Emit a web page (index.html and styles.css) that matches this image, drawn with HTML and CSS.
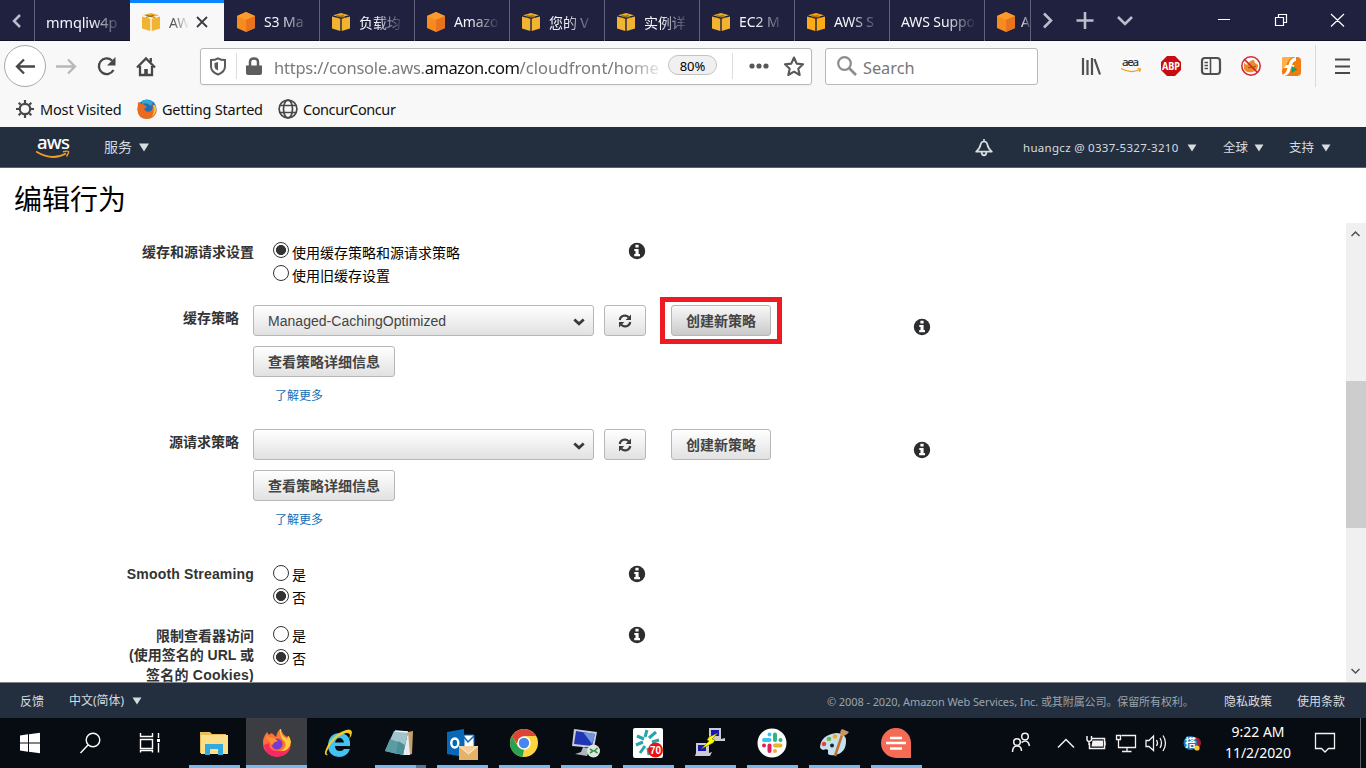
FILE: index.html
```html
<!DOCTYPE html>
<html lang="zh-CN">
<head>
<meta charset="utf-8">
<title>编辑行为</title>
<link rel="stylesheet" href="styles.css">
</head>
<body>
<svg class="defs" aria-hidden="true">
  <symbol id="hex" viewBox="0 0 20 20"><path d="M10 0 19 4V16L10 20 1 16V4Z" fill="#f68b1f"/><path d="M10 0 19 4 10 8 1 4Z" fill="#fb9b2b"/><path d="M10 8 19 4V16L10 20Z" fill="#e9731c"/></symbol>
  <symbol id="cube" viewBox="0 0 20 20"><path d="M10 1 18 3.3 10 5.6 2 3.3Z" fill="#f0b02a"/><path d="M1 4.5 9.3 6.8V19L1 16.6ZM10.7 6.8 19 4.5V16.6L10.7 19Z" fill="#f2b430"/><path d="M13 3 5 5.5M5 3 14 5.6" stroke="#87651f" stroke-width=".8"/></symbol>
  <symbol id="info" viewBox="0 0 18 18"><circle cx="9" cy="9" r="8.2" fill="#2b2d2f"/><path d="M7.4 2.8H10.6V5.6H7.4ZM6.3 7H10.6V12H12V14.2H6.2V12H7.5V9H6.3Z" fill="#fff"/></symbol>
  <symbol id="sync" viewBox="0 0 14 14"><path d="M1.7 6A5.3 5.3 0 0 1 10.7 3.2M12.3 8A5.3 5.3 0 0 1 3.3 10.8" fill="none" stroke="#3c3c3c" stroke-width="2.1"/><path d="M13 .6V6H7.7ZM1 13.4V8H6.3Z" fill="#3c3c3c"/></symbol>
  <symbol id="chev" viewBox="0 0 12 8"><path d="M1.3 1.4 6 5.8 10.7 1.4" fill="none" stroke="#393939" stroke-width="2.7"/></symbol>
  <symbol id="tri" viewBox="0 0 10 9"><path d="M0 .5H10L5 8.5Z" fill="#d7dce0"/></symbol>
</svg>

<div class="tabstrip">
  <div class="scroll-left"><svg width="12" height="16" viewBox="0 0 12 16"><path d="M9 2 3 8 9 14" fill="none" stroke="#bcbccb" stroke-width="2.5"/></svg></div>
  <div class="tab plain first"><span class="tt">mmqliw4p</span></div>
  <div class="tab active"><svg class="fav"><use href="#cube"/></svg><span class="tt">AW</span><svg class="tabx" viewBox="0 0 12 12"><path d="M1 1 11 11M11 1 1 11" stroke="#3c3c43" stroke-width="1.8"/></svg></div>
  <div class="tab nosep"><svg class="fav hex"><use href="#hex"/></svg><span class="tt">S3 Ma</span></div>
  <div class="tab"><svg class="fav"><use href="#cube"/></svg><span class="tt">负载均</span></div>
  <div class="tab"><svg class="fav hex"><use href="#hex"/></svg><span class="tt">Amazo</span></div>
  <div class="tab"><svg class="fav"><use href="#cube"/></svg><span class="tt">您的 V</span></div>
  <div class="tab"><svg class="fav"><use href="#cube"/></svg><span class="tt">实例详</span></div>
  <div class="tab"><svg class="fav"><use href="#cube"/></svg><span class="tt">EC2 M</span></div>
  <div class="tab"><svg class="fav orange"><use href="#cube"/></svg><span class="tt">AWS S</span></div>
  <div class="tab plain"><span class="tt">AWS Suppo</span></div>
  <div class="tab cut"><svg class="fav hex"><use href="#hex"/></svg><span class="tt">A</span></div>
  <svg class="tabtools" width="335" height="41" viewBox="1031 0 335 41" fill="none" stroke="#bcbccb" stroke-width="2.6"><path d="M1044 13.500 1051 20.500 1044 27.500M1076.500 20.500H1093.500M1085 12V29M1118 17 1125 24 1132 17"/><g stroke="#fff" stroke-width="1.2"><path d="M1218 19.500H1230M1275.500 17.500H1283.500V25.500H1275.500ZM1278.500 17.500V14.500H1286.500V22.500H1283.500M1331 14 1344 26.500M1344 14 1331 26.500"/></g></svg>
</div>

<div class="navbar">
  <svg width="200" height="49" viewBox="0 42 200 49" fill="none" stroke="#484848" stroke-width="2.3">
    <circle cx="25" cy="67" r="20.500" fill="#fff" stroke="#a9a9a9" stroke-width="1"/>
    <path d="M35 67.500H17M24 60.500 17 67.500 24 74.500"/><path d="M56 67.500H75M68 60.500 75 67.500 68 74.500" stroke="#b8b8b8"/>
    <path d="M113.500 71A7.800 7.800 0 1 1 112 61.500"/><path d="M115.500 58V66.500H107Z" fill="#484848" stroke="none"/>
    <path d="M137 68.500 146 59.500 155 68.500M140 67V76H152V67M150.800 59V63"/><path d="M144.200 70H147.800V76H144.200Z" fill="#484848" stroke="none"/>
  </svg>
  <div class="urlbar">
    <svg width="68" height="36" viewBox="201 49 68 36"><path d="M218 58.300C220 59.500 222.500 60 225 60V66.500C225 70.500 222 73 218 74.500 214 73 211 70.500 211 66.500V60C213.500 60 216 59.500 218 58.300Z" fill="none" stroke="#5a5a5a" stroke-width="2"/><path d="M218 62V70.500C216 69.500 214.500 68.500 214.500 66.500V63Z" fill="#5a5a5a"/><path d="M236.500 53V79" stroke="#ddd"/><path d="M246 65.500H262V73Q262 75 260 75H248Q246 75 246 73Z" fill="#5d5d5d"/><path d="M250 66V62Q250 58.500 254 58.500T258 62V66" fill="none" stroke="#5d5d5d" stroke-width="2.500"/></svg>
    <div class="url">https://console.aws.<b>amazon.com</b><span>/cloudfront/home</span></div>
    <span class="zoom">80%</span>
    <svg width="92" height="36" viewBox="719 49 92 36"><path d="M732.500 53V79" stroke="#ddd"/><g fill="#585858"><circle cx="752" cy="66" r="2.600"/><circle cx="759" cy="66" r="2.600"/><circle cx="766" cy="66" r="2.600"/></g><path d="M794 57.500 796.700 63.600 803 64.300 798.300 68.700 799.700 75 794 71.700 788.300 75 789.700 68.700 785 64.300 791.300 63.600Z" fill="none" stroke="#585858" stroke-width="2.100" stroke-linejoin="round"/></svg>
  </div>
  <div class="searchbar"><svg width="22" height="22" viewBox="0 0 22 22"><circle cx="8.500" cy="8.500" r="6.300" fill="none" stroke="#8c8c8c" stroke-width="2.200"/><path d="M13 13 20 20" stroke="#8c8c8c" stroke-width="2.600"/></svg><span>Search</span></div>
  <svg class="ext" width="328" height="49" viewBox="1038 41 328 49">
    <path d="M1083 58V75M1087.500 60V75M1092 58V75M1094.500 59 1100 74.500" stroke="#505050" stroke-width="2.200"/>
    <text x="1122" y="66" class="aea" textLength="17">aea</text><path d="M1121 68.500Q1131 74 1140 69.500M1137.500 68.500 1140.500 69 1139.500 72" fill="none" stroke="#f49a1c" stroke-width="1.200"/>
    <path d="M1167 56H1175L1181 62V70L1175 76H1167L1161 70V62Z" fill="#c70d10"/><text x="1162" y="69.700" class="abp" textLength="18" lengthAdjust="spacingAndGlyphs">ABP</text>
    <rect x="1202" y="58" width="18" height="16" rx="3" fill="none" stroke="#505050" stroke-width="2.200"/><path d="M1210.500 58V74M1204.500 62.500H1208M1204.500 65.500H1208M1204.500 68.500H1208" stroke="#505050" stroke-width="1.600"/>
    <path d="M1244 63 1247 65Q1250 60 1254 60L1255 63 1258 65Q1258 71 1252 72 1246 73 1244 69Z" fill="#ec8c27"/><path d="M1248 68Q1251 66 1252 68L1256 66" stroke="#805020" fill="none"/><circle cx="1251" cy="66" r="9.200" fill="none" stroke="#d1252a" stroke-width="1.500"/><path d="M1244.500 59.500 1257.500 72.500" stroke="#d1252a" stroke-width="1.700"/>
    <rect x="1282" y="57" width="19" height="19" rx="4" fill="#f47a12"/><path d="M1282 58Q1282 57 1284 57H1293Q1288 59 1286 66L1282 70Z" fill="#fbb04a"/><path d="M1282 75Q1286 74 1287.500 68H1284L1286 65H1288.500Q1290 58 1296 57V61Q1293 61 1292 65H1294.500L1293 68H1291Q1289 76 1284 76Z" fill="#fff"/><path d="M1291.500 66 1297.500 69.500 1291.500 73Z" fill="#16a357"/>
    <path d="M1315.500 45V87" stroke="#d9d9d9"/><path d="M1335 59.500H1350M1335 66.500H1350M1335 73H1350" stroke="#484848" stroke-width="2.200"/>
  </svg>
</div>

<div class="bookmarks">
  <svg width="18" height="18" viewBox="-9 -9 18 18" stroke="#484848" fill="none"><circle r="5.200" stroke-width="2.200"/><path d="M0-6V-9M0 6V9M-6 0H-9M6 0H9M4.300-4.300 6.300-6.300M-4.300 4.300-6.300 6.300M4.300 4.300 6.300 6.300M-4.300-4.300-6.300-6.300" stroke-width="2.200"/></svg><span class="b1">Most Visited</span>
  <svg width="20" height="20" viewBox="0 0 20 20"><circle cx="10" cy="10" r="9.500" fill="#236fb5"/><path d="M5 2Q11-1 16 3L14 7Q10 3 5 5Z" fill="#35a8d8"/><path d="M1 3 5 5Q7 5 8.500 7L10 8 7 10Q9 14 14 12 17 9 15 5 20 8 19.500 13 17 20 10 20 1 20 .5 11Z" fill="#e86b20"/><path d="M18 6Q21 13 15 17.500 18 12 16 6Z" fill="#f7c242"/></svg><span class="b2">Getting Started</span>
  <svg width="20" height="20" viewBox="0 0 20 20" fill="none" stroke="#484848" stroke-width="1.700"><circle cx="10" cy="10" r="8.900"/><ellipse cx="10" cy="10" rx="4.500" ry="8.900"/><path d="M2 6.500H18M2 13.500H18"/></svg><span class="b3">ConcurConcur</span>
</div>

<header class="awsbar">
  <div class="logo"><span>aws</span><svg width="34" height="9" viewBox="0 0 34 9"><path d="M0 1.500Q16 11.500 30 3.500" fill="none" stroke="#f49b26" stroke-width="1.900"/><path d="M27 1.700Q32 .5 32.500 1.500 33 3 30.500 6.500" fill="none" stroke="#f49b26" stroke-width="1.400"/></svg></div>
  <span class="svc">服务</span><svg class="tri"><use href="#tri"/></svg>
  <svg class="bell" viewBox="0 0 18 18" fill="none" stroke="#d7dce0" stroke-width="1.700"><path d="M1.200 12.700Q5 9 5.500 6 6 2.500 9 2.500T12.500 6Q13 9 16.800 12.700ZM9 0V2M6.500 13.500Q7 16.300 9 16.300T11.500 13.500" stroke-linejoin="round"/></svg>
  <span class="acct">huangcz @ 0337-5327-3210</span><svg class="tri t2"><use href="#tri"/></svg>
  <span class="menu">全球</span><svg class="tri t2"><use href="#tri"/></svg>
  <span class="menu m2">支持</span><svg class="tri t2"><use href="#tri"/></svg>
</header>

<h1>编辑行为</h1>
<main class="pane">
  <div class="form">
    <section class="row r1"><div class="label">缓存和源请求设置</div><div class="radios"><label><i class="radio on"></i><span>使用缓存策略和源请求策略</span></label><label><i class="radio"></i><span>使用旧缓存设置</span></label></div><svg class="info"><use href="#info"/></svg></section>
    <section class="row policy"><div class="label">缓存策略</div><div class="controls"><div class="line"><div class="btn select">Managed-CachingOptimized<svg class="chev"><use href="#chev"/></svg></div><div class="btn sync"><svg><use href="#sync"/></svg></div><div class="mark"><div class="btn create hover">创建新策略</div></div></div><div class="btn view">查看策略详细信息</div><a>了解更多</a></div><svg class="info i2"><use href="#info"/></svg></section>
    <section class="row policy"><div class="label">源请求策略</div><div class="controls"><div class="line"><div class="btn select"><svg class="chev"><use href="#chev"/></svg></div><div class="btn sync"><svg><use href="#sync"/></svg></div><div class="btn create">创建新策略</div></div><div class="btn view">查看策略详细信息</div><a>了解更多</a></div><svg class="info i2 i3"><use href="#info"/></svg></section>
    <section class="row r4"><div class="label sm">Smooth Streaming</div><div class="radios"><label><i class="radio"></i><span>是</span></label><label><i class="radio on"></i><span>否</span></label></div><svg class="info"><use href="#info"/></svg></section>
    <section class="row r5"><div class="label">限制查看器访问<br>(使用签名的 URL 或<br><span class="ck">签名的 Cookies)</span></div><div class="radios"><label><i class="radio"></i><span>是</span></label><label><i class="radio on"></i><span>否</span></label></div><svg class="info"><use href="#info"/></svg></section>
  </div>
  <div class="scrollbar"><svg width="20" height="20" viewBox="0 0 20 20"><path d="M5.500 13 9.500 9 13.500 13" fill="none" stroke="#505050" stroke-width="1.500"/></svg><div class="thumb"></div><svg class="down" width="20" height="20" viewBox="0 0 20 20"><path d="M5.500 7 9.500 11 13.500 7" fill="none" stroke="#505050" stroke-width="1.500"/></svg></div>
</main>

<footer class="foot"><span class="fb">反馈</span><span class="lang">中文(简体)</span><svg class="tri t2"><use href="#tri"/></svg><span class="copy">© 2008 - 2020, Amazon Web Services, Inc. 或其附属公司。保留所有权利。</span><span class="priv">隐私政策</span><span class="terms">使用条款</span></footer>

<div class="taskbar">
  <svg width="183" height="50" viewBox="0 718 183 50" fill="none" stroke="#fff" stroke-width="1.400"><path d="M20 735.500 28 734.300V742.500H20ZM29 734.200 40 732.700V742.500H29ZM20 743.500H28V751.700L20 750.500ZM29 743.500H40V753.300L29 751.800Z" fill="#fff" stroke="none"/><circle cx="93" cy="740" r="6.800"/><path d="M88 745 80.500 753M140.500 733V736.500H152.500V733M140.500 739.500H152.500V748.500H140.500ZM140.500 752.500V750.500H152.500V752.500M158.500 733V738M158.500 743V752.500"/><path d="M157 739H160V742H157Z" fill="#fff" stroke="none"/></svg>
  <div class="task run"><svg viewBox="0 0 32 32"><path d="M2 5H12L14 7H28V26H2Z" fill="#e8bd55"/><path d="M3 8H30V27H3Z" fill="#fddf8b"/><path d="M7 17H25V28H20V22H12V28H7Z" fill="#33aadb"/></svg></div>
  <div class="task run current"><svg viewBox="0 0 32 32"><path d="M4 8 6 5 8 8Q10 5 12 7L15 10Q17 2 20 2 21 7 26 10L28 9Q32 20 26 26 20 31 12 29 2 26 2 16 2 11 4 8Z" fill="#ff7139"/><path d="M3 18Q4 29 16 30 27 29 30 18 25 25 18 24 8 25 8 16Z" fill="#f72863"/><path d="M19 2Q18 10 24 15 26 21 20 24 28 25 30 15 29 10 27 9L26 12Q19 8 20 2Z" fill="#ffcd35"/><circle cx="16" cy="17" r="5.500" fill="#793ad0"/><path d="M6 9Q9 11 13 11L17 14Q12 15 11 19 9 13 5 12Z" fill="#ff9131"/></svg></div>
  <div class="task"><svg viewBox="0 0 32 32"><path d="M28 19H13Q13 24 18 24 21 24 22 22H28Q25 30 17 30 6 29 6 18 7 6 18 6 29 7 28 19ZM13 15.500H22Q21 11 17.500 11T13 15.500Z" fill="#42c4f2"/><path d="M6 28Q1 29 4 22 8 11 19 5 29 0 30 5 30 9 27 12 30 5 24 6 16 8 9 17 2 27 6 28Z" fill="#f8cb2d"/></svg></div>
  <div class="task run split"><svg viewBox="0 0 32 32"><path d="M24 5 29 4 28 27 24 28Z" fill="#c5a06d"/><path d="M10 4 24 5 19 28 1 24Z" fill="#9fc4cb"/><path d="M24 5 26 28 19 28Z" fill="#e8eeee"/><path d="M6 12 14 15 13 27 1 24Z" fill="#5b9ca3"/><path d="M14 14 21 18 19 28 12 26Z" fill="#4b9098"/><path d="M11 4 24 5" stroke="#f3f6f7" stroke-width="1.500"/></svg></div>
  <div class="task run"><svg class="wide" viewBox="0 0 34 34"><path d="M2 5 19 2V30L2 27Z" fill="#0868b8"/><path d="M19 8H29V20H19Z" fill="#fff" stroke="#0868b8"/><path d="M19 10 23 15 29 9" fill="none" stroke="#0868b8" stroke-width="1.500"/><ellipse cx="9.800" cy="16" rx="3.500" ry="4.500" fill="none" stroke="#fff" stroke-width="2.400"/><path d="M14 19H33V33H14Z" fill="#e7b266"/><path d="M14 19 23.500 27 33 19" fill="#f5cf97" stroke="#fff3dc"/></svg></div>
  <div class="task run"><svg viewBox="0 0 32 32"><circle cx="16" cy="16" r="14" fill="#fdd440"/><path d="M16 16H8.500L3.900 9A14 14 0 0 1 28.100 9H16Z" fill="#db4437"/><path d="M3.900 9 10 19.500 16 22.500 14.500 30A14 14 0 0 1 3.900 9Z" fill="#28a152"/><circle cx="16" cy="16" r="6.700" fill="#fff"/><circle cx="16" cy="16" r="5.200" fill="#4787ed"/></svg></div>
  <div class="task run"><svg viewBox="0 0 32 32"><path d="M4 2 27 5 24 21 2 19Z" fill="#c9cfda"/><path d="M6 4 25 7 22 19 4 17Z" fill="#2036b3"/><path d="M13 5 25 7 22 17Z" fill="#6f94e0"/><path d="M13 20 11 25 5 27 17 29 20 22Z" fill="#b0b5bc"/><circle cx="23.500" cy="24" r="6.500" fill="#dfe5df"/><path d="M20 22 23 24 20 26M27.500 21 24.500 24 27.500 26" fill="none" stroke="#389744" stroke-width="1.600"/></svg></div>
  <div class="task run"><svg viewBox="0 0 32 32"><rect x="1" y="1" width="30" height="30" rx="2" fill="#fff"/><g stroke="#27a5a8" stroke-width="3"><path d="M15 3 13 10M24 5 17 11M5 9 12 12M4 18 11 15M8 26 13 19M17 28 16 21M27 13 20 15"/></g><circle cx="23.500" cy="23" r="7.500" fill="#ed1212"/><text x="23.500" y="26.800" class="badge">70</text></svg></div>
  <div class="task run"><svg viewBox="0 0 32 32"><path d="M15 1H27V12L31 11V14H17L15 12ZM2 16H15V26L18 25 16 29H1L2 26Z" fill="#ccc"/><path d="M17 3H25V9H17ZM4 18H12V24H4Z" fill="#1717b5"/><path d="M24 6 15 10 13 13 15 14 7 22 19 16 21 13 18 12Z" fill="#ff0" stroke="#555500" stroke-width=".5"/></svg></div>
  <div class="task run"><svg viewBox="0 0 32 32"><circle cx="16" cy="16" r="14.500" fill="#fff"/><g fill="none" stroke-width="4" stroke-linecap="round"><path d="M8 13H13.500M13.500 7.500V7.600" stroke="#36c5f0"/><path d="M19 7.500V13M24.500 13V13.100" stroke="#2eb67d"/><path d="M19 18.500H24.500M19 24V24.100" stroke="#ecb22e"/><path d="M13.500 18.500V24M8 18.500V18.600" stroke="#e01e5a"/></g></svg></div>
  <div class="task run"><svg viewBox="0 0 32 32"><path d="M2 20Q3 8 18 6 28 6 28 14 28 26 17 28 9 29 10 25 11 21 5 23 2 22 2 20Z" fill="#c7e0ef"/><circle cx="6" cy="17" r="2.300" fill="#e34635"/><circle cx="11" cy="12" r="2.300" fill="#66b94f"/><circle cx="17" cy="9.500" r="2.300" fill="#f1ac2a"/><path d="M17 29 24 8" stroke="#bb7430" stroke-width="2.500"/><path d="M23 9Q21 5 24 2L31 5Q28 9 24 9Z" fill="#c99661"/><circle cx="14" cy="18.500" r="2" fill="#17242c"/></svg></div>
  <div class="task run"><svg viewBox="0 0 32 32"><path d="M16 1A15 15 0 1 0 16 31H31V16A15 15 0 0 0 16 1Z" fill="#f56b55"/><path d="M10 11H22M6 16H26M10 21.500H22" stroke="#fff" stroke-width="2.300"/></svg></div>
  <svg class="tray" width="232" height="50" viewBox="980 718 232 50" fill="none" stroke="#f2f2f2" stroke-width="1.500"><circle cx="1017" cy="742" r="3.300"/><circle cx="1025" cy="736.500" r="3.300"/><path d="M1012.500 752Q1012.500 746 1017 746T1021.500 751M1021.500 742.500Q1028 738.500 1029.500 746M1058 747.500 1066 739.500 1074 747.500"/><path d="M1091.500 738.500H1104.500V748.500H1089.500V743M1087 736V740Q1089 743 1091.500 740V736M1089 741V745M1105 741.500V745.500"/><path d="M1092.500 740.500H1103V746.500H1091.500Z" fill="#f2f2f2" stroke="none"/><path d="M1121.500 735.500H1135.500V747.500H1118.500V741M1116.500 735.500H1120.500V739.500H1116.500ZM1118.500 740V744M1127 748V752M1122 751.500H1131.500M1146 740.500H1149L1153.500 736V750.500L1149 746.500H1146ZM1156.500 740Q1158.500 743 1156.500 746M1160 738Q1163 743 1160 748M1163 735.500Q1168 743 1163 751" stroke-width="1.300"/><circle cx="1195" cy="743" r="6" fill="#ae152e" stroke="none"/><circle cx="1190.500" cy="743" r="7" fill="#2278ad" stroke="none"/><circle cx="1197" cy="748" r="2.600" fill="#ffc830" stroke="none"/><text x="1185" y="747" class="ime">搭</text></svg>
  <div class="clock"><span>9:22 AM</span><span class="date">11/2/2020</span></div>
  <svg class="note" width="66" height="50" viewBox="1300 718 66 50"><path d="M1315.500 733.500H1334.500V748.500H1328.500L1325 752 1321.500 748.500H1315.500Z" fill="none" stroke="#f2f2f2" stroke-width="1.300"/><path d="M1360.500 718V768" stroke="#5a5f65"/></svg>
</div>
</body>
</html>
```
FILE: styles.css
```css
* { box-sizing: border-box; }
body { margin: 0; width: 1366px; height: 768px; overflow: hidden; background: #fff; display: flex; flex-direction: column; font-family: "Noto Sans", "Noto Sans CJK SC", sans-serif; }
body > * { flex-shrink: 0; }
.defs { position: absolute; width: 0; height: 0; }
.tabstrip { height: 41px; display: flex; background: #20213f; color: #f5f5fa; border-bottom: 1px solid #11122a; }
.scroll-left { width: 34px; padding-top: 12px; padding-left: 11px; }
.tab { width: 95px; height: 41px; flex: none; display: flex; align-items: center; border-left: 1px solid #62637a; padding: 2px 0 0 11px; overflow: hidden; font-size: 14px; letter-spacing: -.1px; }
.tab.plain { padding-left: 11px; }
.tab.first { width: 96px; font-size: 14.5px; }
.tab.active { background: #f8f8f8; border-left: 0; border-top: 3px solid #0a84ff; color: #555; width: 94px; padding-top: 0; padding-left: 11px; }
.tab.nosep { border-left: 0; padding-left: 12px; }
.tab.cut { width: 47px; border-right: 1px solid #62637a; }
.tab.cut .fav { margin-right: 5px; }
.tab.cut .tt { margin-right: 0; mask-image: linear-gradient(90deg, #000, transparent 120%); }
.fav { width: 20px; height: 20px; flex: none; margin-right: 8px; }
.fav.orange { filter: hue-rotate(-8deg) saturate(1.3); }
.tt { flex: 1; min-width: 0; margin-right: 8px; white-space: nowrap; overflow: hidden; mask-image: linear-gradient(90deg, #000 35%, transparent 98%); }
.plain .tt { mask-image: linear-gradient(90deg, #000 60%, transparent 100%); }
.active .tt { flex: none; width: 22px; margin-right: 5px; mask-image: linear-gradient(90deg, #000 20%, transparent 90%); }
.tabx { width: 12px; height: 12px; }
.tabtools { flex: none; }
.navbar { height: 49px; display: flex; align-items: center; background: #f8f8f8; }
.navbar > svg { flex: none; }
.urlbar { width: 612px; height: 37px; display: flex; align-items: center; background: #fff; border: 1px solid #b8b8b8; border-radius: 3px; margin-top: 2px; box-shadow: 0 1px 2px #0000000d; }
.urlbar > * { flex: none; }
.url { width: 384px; margin-left: 5px; padding-top: 1px; overflow: hidden; white-space: nowrap; font-size: 16.5px; letter-spacing: -.23px; color: #7b7b7b; mask-image: linear-gradient(90deg, #000 92%, transparent 102%); }
.url b { color: #111; font-weight: 400; letter-spacing: -.5px; }
.url span { letter-spacing: .1px; }
.zoom { width: 49px; height: 20px; margin: -3px 2px 0 10px; border: 1px solid #c3c3c3; border-radius: 10px; background: #f0f0f0; font-size: 13px; line-height: 20px; text-align: center; letter-spacing: 0; }
.searchbar { width: 213px; height: 37px; margin: 2px 0 0 13px; padding-left: 10px; display: flex; align-items: center; gap: 5px; border: 1px solid #b8b8b8; border-radius: 3px; background: #fff; color: #777; font-size: 16.3px; }
.searchbar span { padding-top: 2px; }
.searchbar svg { margin-top: -2px; }
.aea { font: 500 11.5px "Noto Sans"; fill: #232f3e; }
.abp { font: 700 10px "Noto Sans"; fill: #fff; }
.bookmarks { height: 37px; display: flex; align-items: center; padding-left: 16px; background: #f8f8f8; color: #111; font-size: 14.5px; white-space: nowrap; }
.bookmarks svg { flex: none; }
.b1 { width: 97px; margin-left: 6px; letter-spacing: -.15px; }
.b2 { width: 116px; margin-left: 5px; letter-spacing: -.23px; }
.b3 { margin-left: 5px; letter-spacing: -.43px; }
.awsbar { height: 41px; display: flex; align-items: center; background: #232f3e; border-bottom: 1px solid #59636e; color: #d7dce0; font-size: 14px; white-space: nowrap; }
.logo { width: 34px; margin-left: 36px; height: 27px; color: #fff; font-size: 18.5px; font-weight: 500; line-height: 15px; display: flex; flex-direction: column; }
.logo span { padding-left: 1px; letter-spacing: -.8px; }
.logo svg { margin-top: 1px; }
.svc { margin: -2px 0 0 34px; width: 35px; }
.tri { width: 10px; height: 9px; flex: none; }
.tri.t2 { width: 10px; height: 8px; margin: 1px -1px 0 0; }
.bell { width: 18px; height: 18px; margin: 2px 0 0 826px; }
.acct { width: 158px; margin: 0 6px 0 30px; font-size: 11.5px; letter-spacing: .3px; }
.menu { width: 26px; margin: -1px 5px 0 27px; font-size: 12.5px; }
.menu.m2 { margin-left: 26px; margin-right: 6px; }
h1 { height: 55px; margin: 0; padding: 10px 0 0 14px; font: 400 28px/40px "Noto Sans CJK SC", sans-serif; color: #000; }
.pane { height: 459px; display: flex; overflow: hidden; }
.form { width: 1346px; height: 459px; overflow: hidden; font-family: "Liberation Sans", "Noto Sans CJK SC", sans-serif; font-size: 14px; }
.row { display: flex; align-items: flex-start; }
.label { width: 254px; text-align: right; font-weight: 700; line-height: 19.300px; color: #333; }
.radios { width: 355px; padding-left: 19px; color: #000; }
.radios label { height: 23px; display: flex; line-height: 23px; }
.r1 .radios span { padding-top: 1px; }
.radio { width: 16px; height: 16px; margin: 1px 3px 0 0; border: 1px solid #333; border-radius: 50%; }
.radio.on { background: radial-gradient(circle, #333 0 4.700px, #fff 5.300px); }
.info { width: 18px; height: 18px; margin-left: 19px; }
.r1 { height: 82px; padding-top: 18px; }
.r1 .label { padding-top: 2px; }
.r1 .info { margin-top: 1px; }
.policy { height: 124px; }
.policy .label { width: 239px; padding-top: 4px; }
.controls { width: 660px; margin-left: 14px; }
.line { display: flex; height: 31px; }
.btn { height: 31px; display: flex; align-items: center; border: 1px solid #b7b7b7; border-radius: 3px; background: linear-gradient(#fff, #e1e1e1); color: #444; font-weight: 700; padding: 0 14px; white-space: nowrap; }
.btn.select { width: 341px; justify-content: space-between; font-weight: 400; padding-right: 8px; letter-spacing: .03px; }
.chev { width: 12px; height: 8px; margin: 3px 0 0 auto; }
.btn.sync { width: 42px; margin-left: 10px; padding: 0 13px; }
.sync svg { width: 14px; height: 14px; }
.btn.create { width: 100px; margin-left: 25px; padding-bottom: 2px; }
.mark { width: 122px; height: 47px; margin: -8px 0 0 14px; border: 5px solid #ed1c24; padding: 3px 6px 0; }
.mark .btn.create { margin-left: 0; }
.hover { background: linear-gradient(#f8f8f8, #cacaca); }
.btn.view { width: 142px; margin-top: 10px; padding-bottom: 2px; }
.controls a { display: block; margin: 10px 0 0 22px; font-size: 12px; line-height: 18px; color: #146eb4; }
.info.i2 { margin: 13px 0 0 0; }
.info.i2.i3 { margin-top: 12px; }
.r4 { height: 62px; margin-top: 12px; }
.r4 .label { letter-spacing: .17px; }
.r4 .radios { margin-top: -1px; }
.r5 .radios { margin-top: -2px; }
.r5 .info { margin-top: -1px; }
.ck { letter-spacing: .25px; }
.scrollbar { width: 20px; background: #f0f0f0; display: flex; flex-direction: column; }
.thumb { height: 147px; margin-top: 138px; background: #cdcdcd; }
.scrollbar .down { margin-top: auto; }
.foot { height: 36px; display: flex; align-items: center; border-top: 1px solid #818386; background: #232f3e; color: #d7dce0; font-size: 12px; white-space: nowrap; }
.fb { width: 25px; margin-left: 20px; }
.lang { width: 57px; margin: -1px 6px 0 24px; }
.copy { width: 366px; margin-left: 686px; color: #9ba4ad; font-size: 11px; letter-spacing: -.09px; }
.priv { margin-left: 31px; }
.terms { margin-left: 25px; }
.taskbar { height: 50px; display: flex; background: #070b12; }
.taskbar > * { flex: none; }
.task { width: 62px; display: flex; flex-direction: column; align-items: center; padding-top: 9px; }
.task svg { width: 32px; height: 32px; }
.task svg.wide { width: 34px; height: 34px; }
.run::after { content: ""; width: 51px; height: 3px; margin-top: auto; background: #76b9ed; }
.current { width: 61px; margin-left: 1px; background: #3b3d42; }
.current::after { width: 61px; }
.split::after { background: linear-gradient(90deg, #76b9ed 41px, #4d799e 41px); }
.badge { font: 700 10px "Liberation Sans"; fill: #fff; text-anchor: middle; }
.ime { font: 700 11px "Noto Sans CJK SC"; fill: #fff; stroke: none; }
.tray { margin-left: 53px; }
.clock { width: 88px; color: #fff; text-align: center; font-size: 14px; display: flex; flex-direction: column; line-height: 22px; padding: 3px 0 0 4px; letter-spacing: -.05px; }
.clock span:first-child { line-height: 21px; letter-spacing: 0; }
```
